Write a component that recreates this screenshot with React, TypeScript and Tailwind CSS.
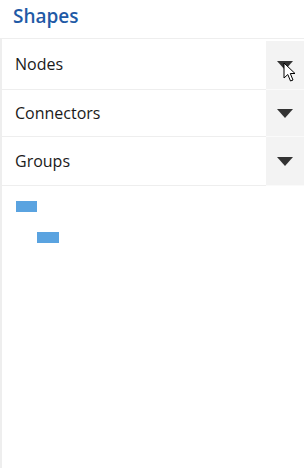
const rows = [
  { label: 'Nodes', h: 'h-[51px]', top: 'mt-[2px]' },
  { label: 'Connectors', h: 'h-[47px]', top: '' },
  { label: 'Groups', h: 'h-[49px]', top: '' },
]

function Caret() {
  return (
    <svg width="16" height="9" viewBox="0 0 16 9">
      <path d="M0 0 H16 L8 9 Z" fill="#333333" />
    </svg>
  )
}

export default function App() {
  return (
    <div className="relative h-[468px] w-[304px] overflow-hidden bg-white font-['Open_Sans','Noto_Sans',sans-serif]">
      <div className="h-[38px] pl-[13px] pt-[2px] text-[19px] font-semibold leading-[28px] text-[#1f5aa6]">
        Shapes
      </div>
      <div className="h-[430px] border-l-2 border-t border-[#eeeeee]">
        {rows.map((r) => (
          <div key={r.label} className={'flex ' + r.h}>
            <div className="flex flex-1 items-center border-b border-[#eeeeee] pl-[13px] text-[16px] text-[#1a1a1a]">
              {r.label}
            </div>
            <div
              className={
                'flex w-[38px] items-center justify-center border-b border-[#fafafa] bg-[#f3f3f3] ' + r.top
              }
            >
              <Caret />
            </div>
          </div>
        ))}
        <div className="ml-[14px] mt-[15px] h-[11px] w-[21px] bg-[#5aa3e0]" />
        <div className="ml-[35px] mt-[20px] h-[11px] w-[22px] bg-[#5aa3e0]" />
      </div>
      <svg className="absolute left-[283px] top-[62px]" width="14" height="21" viewBox="0 0 14 21">
        <path
          d="M1 1 L1 16 L4.8 12.5 L7.5 19 L10 18 L7.3 11.5 L12 11.5 Z"
          fill="#ffffff"
          stroke="#000000"
          strokeWidth="1"
          strokeLinejoin="round"
        />
      </svg>
    </div>
  )
}
